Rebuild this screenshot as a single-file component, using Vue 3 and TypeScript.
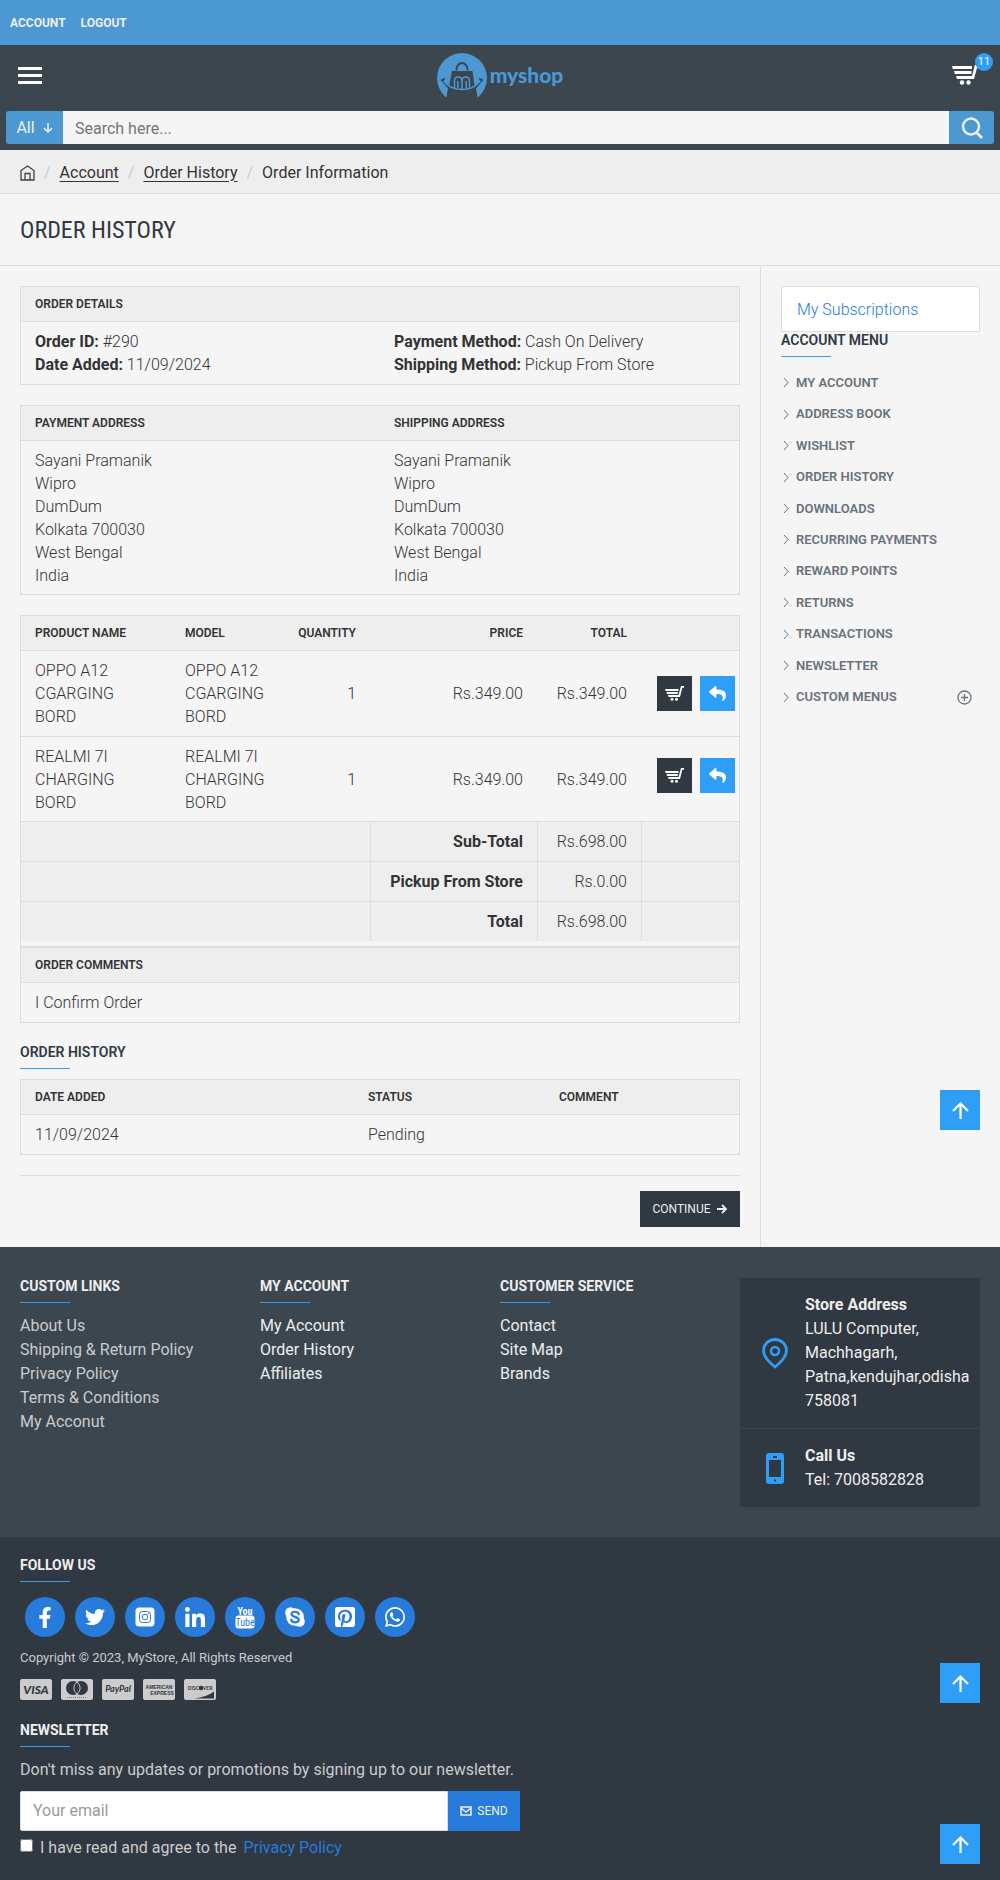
<script setup lang="ts">
import { ref } from 'vue'

interface Product {
  name: string
  model: string
  quantity: number
  price: string
  total: string
}

interface Column {
  title: string
  dim?: boolean
  links: string[]
}

const crumbs: string[] = ['Account', 'Order History']

const address: string[] = [
  'Sayani Pramanik',
  'Wipro',
  'DumDum',
  'Kolkata 700030',
  'West Bengal',
  'India',
]

const products: Product[] = [
  { name: 'OPPO A12 CGARGING BORD', model: 'OPPO A12 CGARGING BORD', quantity: 1, price: 'Rs.349.00', total: 'Rs.349.00' },
  { name: 'REALMI 7I CHARGING BORD', model: 'REALMI 7I CHARGING BORD', quantity: 1, price: 'Rs.349.00', total: 'Rs.349.00' },
]

const totals: { label: string; value: string }[] = [
  { label: 'Sub-Total', value: 'Rs.698.00' },
  { label: 'Pickup From Store', value: 'Rs.0.00' },
  { label: 'Total', value: 'Rs.698.00' },
]

const menu: string[] = [
  'My Account',
  'Address Book',
  'Wishlist',
  'Order History',
  'Downloads',
  'Recurring Payments',
  'Reward Points',
  'Returns',
  'Transactions',
  'Newsletter',
  'Custom Menus',
]

const columns: Column[] = [
  { title: 'Custom Links', dim: true, links: ['About Us', 'Shipping & Return Policy', 'Privacy Policy', 'Terms & Conditions', 'My Acconut'] },
  { title: 'My Account', links: ['My Account', 'Order History', 'Affiliates'] },
  { title: 'Customer Service', links: ['Contact', 'Site Map', 'Brands'] },
]

const search = ref('')
const email = ref('')
const agreed = ref(false)
</script>

<template>
  <div class="page">
    <nav class="topbar" aria-label="Account">
      <a href="#">Account</a>
      <a href="#">Logout</a>
    </nav>

    <header class="header">
      <div class="header-main">
        <button class="burger" type="button" aria-label="Menu">
          <span></span><span></span><span></span>
        </button>
        <a class="logo" href="#" aria-label="myshop">
          <svg width="50" height="44" viewBox="0 0 50 44">
            <circle cx="25" cy="25" r="25" fill="#4b98d3" />
            <path d="M9.500 46V44L11 35.500 4.500 27 10 31Q25 42 40 31L45.500 27 39 35.500 40.500 44V46z" fill="#3b464f" />
            <path d="M15 18H35.500L37.500 33Q25 40 12 33z" fill="#3b464f" />
            <path d="M19.500 17.500C19 7.500 31 7.500 30.500 17.500" fill="none" stroke="#3b464f" stroke-width="2" />
            <path d="M5.500 26.500Q9 36 25 36.500T44.500 26.500M4 27.500L8 25.500M46 27.500L42 25.500" fill="none" stroke="#3b464f" stroke-width="1.500" />
            <path d="M7 28Q13 36.500 25 36.500T43 28" fill="none" stroke="#4b98d3" stroke-width="1.500" />
            <path d="M17.500 35V28Q17.500 24 21.200 24T25 28V36M25 28Q25 24 28.800 24T32.500 28V35M20.800 35V28M29.200 35V28" fill="none" stroke="#4b98d3" stroke-width="1.500" />
          </svg>
          <span>myshop</span>
        </a>
        <a class="cart" href="#" aria-label="Cart, 11 items">
          <svg width="27" height="20" viewBox="0 0 27 20" fill="#fff">
            <path d="M0 1H20V4H.8zM2 6H19.500V9H2.800zM4 11H20L22.800 0H27V3H25L22 14H5z" />
            <circle cx="10" cy="17.500" r="2.200" /><circle cx="16.500" cy="17.500" r="2.200" />
          </svg>
          <span class="badge">11</span>
        </a>
      </div>
      <form class="search" @submit.prevent>
        <button class="category" type="button">
          All
          <svg width="10" height="10" viewBox="0 0 10 10"><path d="M5 0V9M1 5L5 9 9 5" fill="none" stroke="#eee" stroke-width="1.500" /></svg>
        </button>
        <input v-model="search" type="text" placeholder="Search here..." aria-label="Search" />
        <button class="find" type="submit" aria-label="Search">
          <svg width="22" height="22" viewBox="0 0 22 22"><circle cx="10" cy="9.500" r="8" fill="none" stroke="#eee" stroke-width="2.500" /><path d="M15 15L21 21" stroke="#eee" stroke-width="2.500" /></svg>
        </button>
      </form>
    </header>

    <nav class="breadcrumb" aria-label="Breadcrumb">
      <a class="home" href="#" aria-label="Home">
        <svg width="15" height="16" viewBox="0 0 15 16"><path d="M1 5.500L7.500 1 14 5.500V15H1zM5 15V8.500H10V15" fill="none" stroke="#3b464f" stroke-width="1.300" /></svg>
      </a>
      <template v-for="crumb in crumbs" :key="crumb">
        <i>/</i><a href="#">{{ crumb }}</a>
      </template>
      <i>/</i><span>Order Information</span>
    </nav>

    <h1 class="page-title">Order History</h1>

    <div class="columns">
      <main class="content">
        <table class="panel halves">
          <thead><tr><th colspan="2">Order Details</th></tr></thead>
          <tbody>
            <tr>
              <td><b>Order ID:</b> #290<br /><b>Date Added:</b> 11/09/2024</td>
              <td><b>Payment Method:</b> Cash On Delivery<br /><b>Shipping Method:</b> Pickup From Store</td>
            </tr>
          </tbody>
        </table>

        <table class="panel halves addresses">
          <thead><tr><th>Payment Address</th><th>Shipping Address</th></tr></thead>
          <tbody>
            <tr>
              <td v-for="n in 2" :key="n"><div v-for="line in address" :key="line">{{ line }}</div></td>
            </tr>
          </tbody>
        </table>

        <div class="products">
          <table>
            <colgroup>
              <col /><col class="c-model" /><col class="c-qty" /><col class="c-price" /><col class="c-total" /><col class="c-act" />
            </colgroup>
            <thead>
              <tr>
                <th>Product Name</th><th>Model</th><th class="num">Quantity</th><th class="num">Price</th><th class="num">Total</th><th></th>
              </tr>
            </thead>
            <tbody>
              <tr v-for="p in products" :key="p.name">
                <td>{{ p.name }}</td>
                <td>{{ p.model }}</td>
                <td class="num">{{ p.quantity }}</td>
                <td class="num">{{ p.price }}</td>
                <td class="num">{{ p.total }}</td>
                <td class="actions">
                  <div>
                    <button class="reorder" type="button" aria-label="Reorder">
                      <svg width="19" height="15" viewBox="0 0 19 15" fill="#fff">
                        <path d="M0 3H13.500V5H.7zM1.500 6H12.800V8H2zM3 9H13.500L16 0H19V1.800H17.300L15 11H3.700z" />
                        <circle cx="7" cy="13.200" r="1.500" /><circle cx="11.500" cy="13.200" r="1.500" />
                      </svg>
                    </button>
                    <button class="return" type="button" aria-label="Return">
                      <svg width="17" height="17" viewBox="0 0 512 512" fill="#fff"><path d="M8.309 189.836L184.313 37.851C199.719 24.546 224 35.347 224 56.015v80.053c160.629 1.839 288 34.032 288 186.258 0 61.441-39.581 122.309-83.333 154.132-13.653 9.931-33.111-2.533-28.077-18.631 45.344-145.012-21.507-183.510-176.590-185.742V360c0 20.700-24.300 31.453-39.687 18.164l-176.004-152c-11.071-9.562-11.086-26.753 0-36.328z" /></svg>
                    </button>
                  </div>
                </td>
              </tr>
            </tbody>
            <tfoot>
              <tr v-for="t in totals" :key="t.label">
                <td colspan="3"></td>
                <td class="num"><b>{{ t.label }}</b></td>
                <td class="num">{{ t.value }}</td>
                <td></td>
              </tr>
            </tfoot>
          </table>
        </div>

        <table class="panel comments">
          <thead><tr><th>Order Comments</th></tr></thead>
          <tbody><tr><td>I Confirm Order</td></tr></tbody>
        </table>

        <h2 class="heading">Order History</h2>
        <table class="panel history">
          <colgroup><col /><col class="c-status" /><col class="c-comment" /></colgroup>
          <thead><tr><th>Date Added</th><th>Status</th><th>Comment</th></tr></thead>
          <tbody><tr><td>11/09/2024</td><td>Pending</td><td></td></tr></tbody>
        </table>

        <div class="buttons">
          <button class="continue" type="button">
            Continue
            <svg width="11" height="10" viewBox="0 0 11 10"><path d="M0 5H9M5 1L9 5 5 9" fill="none" stroke="#eee" stroke-width="1.800" /></svg>
          </button>
        </div>
      </main>

      <aside class="sidebar">
        <a class="subscriptions" href="#">My Subscriptions</a>
        <h2 class="heading">Account Menu</h2>
        <ul>
          <li v-for="item in menu" :key="item">
            <svg width="6" height="9" viewBox="0 0 6 9"><path d="M1 0L5 4.500 1 9" fill="none" stroke="#69727b" stroke-width="1" /></svg>
            <a href="#">{{ item }}</a>
            <button v-if="item === 'Custom Menus'" type="button" aria-label="Expand">
              <svg width="15" height="15" viewBox="0 0 15 15"><path d="M7.500 4V11M4 7.500H11" stroke="#69727b" stroke-width="1.300" /><circle cx="7.500" cy="7.500" r="6.500" fill="none" stroke="#69727b" stroke-width="1.300" /></svg>
            </button>
          </li>
        </ul>
        <a class="to-top" href="#" aria-label="Back to top">
          <svg width="17" height="17" viewBox="0 0 17 17"><path d="M8.500 17V2M1 9L8.500 1.500 16 9" fill="none" stroke="#fff" stroke-width="2.200" /></svg>
        </a>
      </aside>
    </div>

    <footer>
      <div class="footer-links">
        <section v-for="col in columns" :key="col.title" :class="{ dim: col.dim }">
          <h2 class="heading light">{{ col.title }}</h2>
          <a v-for="link in col.links" :key="link" href="#">{{ link }}</a>
        </section>
        <div class="contact">
          <div>
            <svg width="26" height="31" viewBox="0 0 26 31" fill="none" stroke="#2f9ef7"><path d="M13 29C8 25 1.500 18.500 1.500 12.500a11.500 11 0 0 1 23 0C24.500 18.500 18 25 13 29z" stroke-width="2.800" /><circle cx="13" cy="13" r="4" stroke-width="2.600" /></svg>
            <p><b>Store Address</b><br />LULU Computer,<br />Machhagarh,<br />Patna,kendujhar,odisha<br />758081</p>
          </div>
          <div>
            <svg width="26" height="31" viewBox="0 0 26 31"><path d="M7 0H19a3 3 0 0 1 3 3V28a3 3 0 0 1-3 3H7a3 3 0 0 1-3-3V3a3 3 0 0 1 3-3zM7 7V24H19V7z" fill="#2f9ef7" fill-rule="evenodd" /><path d="M11 4H15M12 27.500H14" stroke="#303841" stroke-width="2" /></svg>
            <p><b>Call Us</b><br />Tel: 7008582828</p>
          </div>
        </div>
      </div>

      <div class="footer-bottom">
        <h2 class="heading light">Follow Us</h2>
        <div class="social">
          <a href="#" aria-label="Facebook"><svg width="14" height="21" viewBox="0 0 320 512"><path d="M279.140 288l14.220-92.660h-88.910v-60.130c0-25.350 12.420-50.060 52.240-50.060h40.420V6.260S260.430 0 225.360 0c-73.220 0-121.080 44.380-121.080 124.720v70.620H22.890V288h81.390v224h100.170V288z" /></svg></a>
          <a href="#" aria-label="Twitter"><svg width="20" height="20" viewBox="0 0 512 512"><path d="M459.370 151.716c.325 4.548.325 9.097.325 13.645 0 138.720-105.583 298.558-298.558 298.558-59.452 0-114.680-17.219-161.137-47.106 8.447.974 16.568 1.299 25.340 1.299 49.055 0 94.213-16.568 130.274-44.832-46.132-.975-84.792-31.188-98.112-72.772 6.498.974 12.995 1.624 19.818 1.624 9.421 0 18.843-1.300 27.614-3.573-48.081-9.747-84.143-51.980-84.143-102.985v-1.299c13.969 7.797 30.214 12.670 47.431 13.319-28.264-18.843-46.781-51.005-46.781-87.391 0-19.492 5.197-37.360 14.294-52.954 51.655 63.675 129.300 105.258 216.365 109.807-1.624-7.797-2.599-15.918-2.599-24.040 0-57.828 46.782-104.934 104.934-104.934 30.213 0 57.502 12.670 76.670 33.137 23.715-4.548 46.456-13.320 66.599-25.340-7.798 24.366-24.366 44.833-46.132 57.827 21.117-2.273 41.584-8.122 60.426-16.243-14.292 20.791-32.161 39.308-52.628 54.253z" /></svg></a>
          <a href="#" aria-label="Instagram"><svg width="20" height="20" viewBox="0 0 20 20"><rect x="0.500" y="0.500" width="19" height="19" rx="3.500" /><g fill="none" stroke="#277bdb"><rect x="4.500" y="4.500" width="11" height="11" rx="3" stroke-width="1" /><circle cx="10" cy="10" r="2.800" stroke-width="1" /></g><circle cx="13.200" cy="6.800" r="0.700" fill="#277bdb" /></svg></a>
          <a href="#" aria-label="LinkedIn"><svg width="20" height="20" viewBox="0 0 448 448"><path d="M100.280 448H7.400V148.900h92.880zM53.790 108.100C24.090 108.100 0 83.500 0 53.800a53.790 53.790 0 0 1 107.580 0c0 29.700-24.100 54.300-53.790 54.300zM447.900 448h-92.680V302.400c0-34.700-.7-79.200-48.290-79.200-48.290 0-55.690 37.700-55.690 76.700V448h-92.780V148.900h89.080v40.800h1.300c12.400-23.500 42.690-48.300 87.880-48.300 94 0 111.280 61.900 111.280 142.300V448z" /></svg></a>
          <a href="#" aria-label="YouTube"><svg width="20" height="24" viewBox="0 0 20 24"><rect x="0.500" y="10.500" width="19" height="13" rx="3" /><text x="10" y="9.500" text-anchor="middle" class="yt">You</text><text x="10" y="21" text-anchor="middle" class="yt inv">Tube</text></svg></a>
          <a href="#" aria-label="Skype"><svg width="20" height="20" viewBox="0 0 20 20"><circle cx="10" cy="10" r="8.800" /><circle cx="5.500" cy="5.500" r="5.300" /><circle cx="14.500" cy="14.500" r="5.300" /><path d="M13.800 7.300C13 3.800 6.500 4 6.500 7.200S13.800 9.300 13.800 12.800 6.600 16.300 6.200 12.600" fill="none" stroke="#277bdb" stroke-width="2.200" stroke-linecap="round" /></svg></a>
          <a href="#" aria-label="Pinterest"><svg width="20" height="20" viewBox="0 32 448 448"><path d="M448 80v352c0 26.500-21.500 48-48 48H154.400c9.800-16.400 22.400-40 27.400-59.300 3-11.500 15.300-58.400 15.300-58.400 8 15.300 31.400 28.200 56.300 28.200 74.100 0 127.400-68.100 127.400-152.700 0-81.100-66.200-141.800-151.400-141.800-106 0-162.200 71.100-162.200 148.600 0 36 19.200 80.800 49.800 95.100 4.700 2.200 7.100 1.200 8.200-3.300.8-3.400 5-20.100 6.800-27.800.6-2.500.3-4.600-1.700-7-10.100-12.300-18.300-34.900-18.300-56 0-54.200 41-106.600 110.900-106.600 60.300 0 102.600 41.100 102.600 99.900 0 66.400-33.500 112.400-77.200 112.400-24.100 0-42.100-19.900-36.400-44.400 6.900-29.200 20.300-60.700 20.300-81.800 0-53-75.500-45.700-75.500 25 0 21.700 7.300 36.500 7.300 36.500-31.400 132.800-36.100 134.500-29.600 192.600l2.200.8H48c-26.500 0-48-21.500-48-48V80c0-26.500 21.500-48 48-48h352c26.500 0 48 21.500 48 48z" /></svg></a>
          <a href="#" aria-label="WhatsApp"><svg width="20" height="20" viewBox="0 32 448 448"><path d="M380.900 97.100C339 55.100 283.200 32 223.900 32c-122.400 0-222 99.600-222 222 0 39.100 10.200 77.300 29.600 111L0 480l117.700-30.900c32.400 17.700 68.900 27 106.100 27h.1c122.300 0 224.100-99.600 224.100-222 0-59.300-25.200-115-67.100-157zm-157 341.600c-33.200 0-65.700-8.900-94-25.700l-6.700-4-69.800 18.300L72 359.200l-4.400-7c-18.500-29.400-28.200-63.300-28.200-98.200 0-101.700 82.800-184.500 184.600-184.500 49.300 0 95.600 19.200 130.400 54.100 34.800 34.900 56.200 81.200 56.100 130.500 0 101.800-84.900 184.600-186.600 184.600zm101.200-138.200c-5.500-2.800-32.800-16.200-37.900-18-5.100-1.900-8.800-2.800-12.500 2.800-3.700 5.600-14.300 18-17.600 21.800-3.200 3.700-6.500 4.200-12 1.400-32.600-16.300-54-29.100-75.500-66-5.700-9.800 5.700-9.100 16.300-30.300 1.800-3.700.9-6.900-.5-9.700-1.400-2.800-12.500-30.100-17.100-41.200-4.500-10.800-9.100-9.300-12.500-9.500-3.200-.2-6.900-.2-10.600-.2-3.700 0-9.700 1.400-14.800 6.900-5.100 5.600-19.400 19-19.400 46.300 0 27.300 19.900 53.700 22.600 57.400 2.800 3.700 39.100 59.700 94.800 83.800 35.200 15.200 49 16.500 66.600 13.900 10.700-1.600 32.800-13.400 37.400-26.400 4.600-13 4.600-24.100 3.200-26.400-1.300-2.500-5-3.900-10.500-6.600z" /></svg></a>
        </div>
        <p class="copyright">Copyright © 2023, MyStore, All Rights Reserved</p>
        <div class="cards">
          <svg viewBox="0 0 32 21" role="img" aria-label="Visa"><rect width="32" height="21" rx="2" /><text x="16" y="15" text-anchor="middle" class="visa">VISA</text></svg>
          <svg viewBox="0 0 32 21" role="img" aria-label="Mastercard"><rect width="32" height="21" rx="2" /><circle cx="12" cy="9" r="7" class="ink" /><circle cx="20" cy="9" r="7" class="ink" /><path d="M16 3.200A7 7 0 0 1 16 14.800 7 7 0 0 1 16 3.200z" fill="none" stroke="#ccc" stroke-width="1" /><path d="M6 18.500H26" stroke="#303841" stroke-width="1" stroke-dasharray="1 1" opacity="0.500" /></svg>
          <svg viewBox="0 0 32 21" role="img" aria-label="PayPal"><rect width="32" height="21" rx="2" /><text x="16" y="13" text-anchor="middle" class="paypal">PayPal</text></svg>
          <svg viewBox="0 0 32 21" role="img" aria-label="American Express"><rect width="32" height="21" rx="2" /><text x="16" y="10" text-anchor="middle" class="amex">AMERICAN</text><text x="19" y="16" text-anchor="middle" class="amex">EXPRESS</text></svg>
          <svg viewBox="0 0 32 21" role="img" aria-label="Discover"><rect width="32" height="21" rx="2" /><text x="16" y="11" text-anchor="middle" class="discover">DISCOVER</text><circle cx="17" cy="9" r="2.200" class="ink" /><path d="M10 19.500Q23 18 30 12.500V19.500z" class="ink" /></svg>
        </div>

        <h2 class="heading light">Newsletter</h2>
        <form class="newsletter" @submit.prevent>
          <label for="email">Don't miss any updates or promotions by signing up to our newsletter.</label>
          <div class="field">
            <input id="email" v-model="email" type="email" placeholder="Your email" />
            <button type="submit">
              <svg width="12" height="10" viewBox="0 0 12 10"><path d="M1 1H11V9H1zM1 2L6 6 11 2" fill="none" stroke="#eee" stroke-width="1.500" /></svg>
              Send
            </button>
          </div>
          <div class="agree">
            <input id="agree" v-model="agreed" type="checkbox" />
            <label for="agree">I have read and agree to the</label>
            <a href="#">Privacy Policy</a>
          </div>
        </form>
        <a v-for="place in ['upper', 'lower']" :key="place" class="to-top" :class="place" href="#" aria-label="Back to top">
          <svg width="17" height="17" viewBox="0 0 17 17"><path d="M8.500 17V2M1 9L8.500 1.500 16 9" fill="none" stroke="#fff" stroke-width="2.200" /></svg>
        </a>
      </div>
    </footer>
  </div>
</template>

<style>
body {
  margin: 0;
  background: #f5f5f5;
}
</style>

<style scoped>
* {
  box-sizing: border-box;
}
.page {
  font: 400 16px/24px Roboto, "Noto Sans", sans-serif;
  color: #333;
  background: #f5f5f5;
}
a {
  color: inherit;
  text-decoration: none;
}
button,
input {
  margin: 0;
  padding: 0;
  border: 0;
  border-radius: 0;
  font: inherit;
  color: inherit;
}
button {
  display: flex;
  align-items: center;
  justify-content: center;
  cursor: pointer;
}
svg {
  display: block;
  flex: none;
}
p,
h1,
h2,
ul {
  margin: 0;
  padding: 0;
}
b {
  font-weight: 700;
}

.topbar {
  display: flex;
  align-items: center;
  gap: 15px;
  height: 45px;
  padding: 0 10px;
  background: #4b98d3;
  color: #eee;
  font-size: 12px;
  font-weight: 700;
  text-transform: uppercase;
}
.header {
  padding: 0 6px 6px;
  background: #3b464f;
}
.header-main {
  display: flex;
  align-items: center;
  justify-content: space-between;
  height: 66px;
  padding: 0 12px 6px;
}
.burger {
  flex-direction: column;
  gap: 4px;
  width: 30px;
  align-items: flex-start;
  background: none;
}
.burger span {
  width: 24px;
  height: 3px;
  background: #fff;
}
.logo {
  display: flex;
  align-items: center;
  gap: 3px;
  color: #4b98d3;
  font: 900 21px/24px Lato, sans-serif;
}
.cart {
  position: relative;
  width: 30px;
}
.badge {
  position: absolute;
  top: -12px;
  right: -11px;
  width: 18px;
  height: 18px;
  border-radius: 9px;
  background: #2f9ef7;
  color: #fff;
  font-size: 11px;
  line-height: 18px;
  text-align: center;
}
.search {
  display: flex;
  height: 33px;
}
.category {
  width: 57px;
  gap: 8px;
  border-radius: 3px 0 0 3px;
  background: #4b98d3;
  color: #eee;
}
.search input {
  flex: 1;
  min-width: 0;
  padding: 2px 12px 0;
  background: #f5f5f5;
}
.search input::placeholder {
  color: #757575;
}
.find {
  width: 45px;
  border-radius: 0 3px 3px 0;
  background: #4b98d3;
}

.breadcrumb {
  display: flex;
  align-items: center;
  gap: 9px;
  height: 44px;
  padding: 2px 20px 0;
  border-bottom: 1px solid #ddd;
  background: #eee;
}
.breadcrumb i {
  color: #ccc;
  font-style: normal;
}
.breadcrumb a:not(.home) {
  text-decoration: underline;
  text-underline-offset: 3px;
}
.page-title {
  padding: 21px 20px 19px;
  border-bottom: 1px solid #ddd;
  color: #303841;
  font: 400 24px/31px "Roboto Condensed", "Liberation Sans Narrow", sans-serif;
  text-transform: uppercase;
}

.columns {
  display: flex;
}
.content {
  flex: 1;
  min-width: 0;
  padding: 20px;
}
table {
  width: 100%;
  border-spacing: 0;
  table-layout: fixed;
  font-weight: 300;
  line-height: 23px;
}
.panel,
.products {
  margin-bottom: 20px;
  border: 1px solid #ddd;
}
th {
  height: 35px;
  padding: 0 14px;
  border-bottom: 1px solid #ddd;
  background: #eee;
  font-size: 12px;
  font-weight: 600;
  text-align: left;
  text-transform: uppercase;
}
td {
  padding: 8px 14px;
  vertical-align: top;
}
.addresses td {
  padding-bottom: 7px;
}
.num {
  padding-right: 15px;
  text-align: right;
}
.products {
  margin-bottom: 0;
  padding-bottom: 5px;
}
.products td {
  border-bottom: 1px solid #ddd;
  vertical-align: middle;
}
.products tbody tr:last-child td {
  padding-bottom: 7px;
}
.c-model {
  width: 110px;
}
.c-qty {
  width: 90px;
}
.c-price {
  width: 167px;
}
.c-total {
  width: 104px;
}
.c-act {
  width: 97px;
}
.products tfoot td {
  padding-right: 14px;
  border-right: 1px solid #ddd;
  background: #eee;
  white-space: nowrap;
}
.products tfoot td:last-child {
  border-right: 0;
}
.products tfoot tr:last-child td {
  border-bottom: 0;
}
.products .actions {
  padding: 0 4px;
}
.actions div {
  display: flex;
  justify-content: flex-end;
  gap: 8px;
}
.actions button {
  width: 35px;
  height: 35px;
}
.reorder {
  background: #303841;
}
.return {
  background: #2f9ef7;
}
.comments {
  margin-bottom: 21px;
}
.c-status {
  width: 191px;
}
.c-comment {
  width: 194px;
}
.heading {
  margin-bottom: 10px;
  color: #303841;
  font-size: 14px;
  font-weight: 600;
  line-height: 16px;
  text-transform: uppercase;
}
.heading::after {
  content: "";
  display: block;
  width: 50px;
  height: 1px;
  margin-top: 8px;
  background: #2f9ef7;
}
.heading.light {
  margin-bottom: 11px;
  color: #eee;
  font-weight: 700;
}
.buttons {
  display: flex;
  justify-content: flex-end;
  padding-top: 15px;
  border-top: 1px solid #ddd;
}
.continue {
  gap: 6px;
  width: 100px;
  height: 36px;
  background: #303841;
  color: #eee;
  font-size: 12px;
  text-transform: uppercase;
}

.sidebar {
  position: relative;
  width: 240px;
  padding: 20px;
  border-left: 1px solid #ddd;
}
.subscriptions {
  display: block;
  padding: 11px 15px 9px;
  border: 1px solid #ddd;
  border-radius: 3px 3px 0 0;
  background: #fff;
  color: #277bdb;
  font-weight: 300;
}
.sidebar ul {
  display: grid;
  min-height: 346px;
  list-style: none;
}
.sidebar li {
  display: flex;
  align-items: center;
  gap: 7px;
  padding: 0 8px 0 2px;
  color: #69727b;
  font-size: 13px;
  font-weight: 600;
  text-transform: uppercase;
}
.sidebar li button {
  margin-left: auto;
  background: none;
}
.to-top {
  position: absolute;
  right: 20px;
  display: flex;
  align-items: center;
  justify-content: center;
  width: 40px;
  height: 40px;
  background: #2f9ef7;
}
.sidebar .to-top {
  bottom: 117px;
}
.to-top.upper {
  bottom: 177px;
}
.to-top.lower {
  bottom: 16px;
}

.footer-links {
  display: grid;
  grid-template-columns: repeat(4, 1fr);
  padding: 31px 20px 30px;
  background: #3b464f;
  color: #eee;
}
.footer-links section {
  display: flex;
  flex-direction: column;
  align-items: flex-start;
}
.footer-links .dim a {
  color: #ccc;
}
.contact > div {
  display: flex;
  align-items: center;
  gap: 17px;
  padding: 15px 0 15px 22px;
  background: #303841;
}
.contact > div + div {
  margin-top: 1px;
}

.footer-bottom {
  position: relative;
  padding: 20px;
  background: #303841;
  color: #ccc;
}
.social {
  display: flex;
  gap: 10px;
  padding: 4px 5px 0;
}
.social a {
  display: flex;
  align-items: center;
  justify-content: center;
  width: 40px;
  height: 40px;
  border-radius: 50%;
  background: #277bdb;
  fill: #fff;
}
.yt {
  font: 700 10px "Roboto Condensed", "Liberation Sans Narrow", sans-serif;
}
.yt.inv {
  font-weight: 400;
  fill: #277bdb;
}
.copyright {
  padding-top: 11px;
  font-size: 13px;
  line-height: 20px;
}
.cards {
  display: flex;
  gap: 9px;
  padding: 11px 0 22px;
  fill: #ccc;
}
.cards svg {
  width: 32px;
  height: 21px;
}
.cards text,
.cards .ink {
  fill: #303841;
}
.visa {
  font: italic 900 12px Lato, sans-serif;
}
.paypal {
  font: italic 700 9px Lato, sans-serif;
}
.amex {
  font: 700 5px "Liberation Sans", sans-serif;
}
.discover {
  font: 700 5px Lato, sans-serif;
}
.newsletter {
  width: 500px;
  max-width: 100%;
}
.newsletter > label {
  display: block;
  white-space: nowrap;
}
.field {
  display: flex;
  height: 40px;
  margin: 9px 0 5px;
}
.field input {
  flex: 1;
  min-width: 0;
  padding: 0 12px;
  border: 1px solid #ddd;
  border-radius: 2px 0 0 2px;
  background: #fff;
  color: #333;
}
.field input::placeholder {
  color: #999;
}
.field button {
  gap: 5px;
  width: 72px;
  background: #277bdb;
  color: #eee;
  font-size: 12px;
  text-transform: uppercase;
}
.agree {
  display: flex;
  gap: 7px;
}
.agree input {
  width: 13px;
  height: 13px;
  margin-top: 3px;
}
.agree a {
  color: #277bdb;
}
</style>
